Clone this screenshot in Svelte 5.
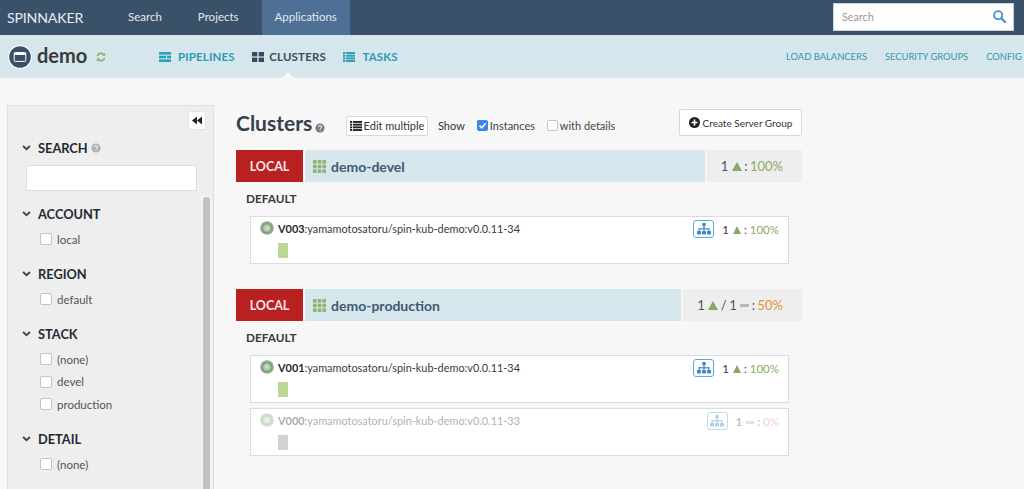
<script>
  const clusters = [
    { name: 'demo-devel', groups: [
      { id: 'V003', rest: ':yamamotosatoru/spin-kub-demo:v0.0.11-34', up: true }
    ], summary: 'up' },
    { name: 'demo-production', groups: [
      { id: 'V001', rest: ':yamamotosatoru/spin-kub-demo:v0.0.11-34', up: true },
      { id: 'V000', rest: ':yamamotosatoru/spin-kub-demo:v0.0.11-33', up: false }
    ], summary: 'mixed' }
  ];
  const filters = [
    { title: 'ACCOUNT', items: ['local'] },
    { title: 'REGION', items: ['default'] },
    { title: 'STACK', items: ['(none)', 'devel', 'production'] },
    { title: 'DETAIL', items: ['(none)'] }
  ];
  const spokes = [0, 51.4, 102.8, 154.3, 205.7, 257.1, 308.6];
</script>

{#snippet chevron()}
  <svg class="chev" viewBox="0 0 10 7" aria-hidden="true"><path d="M1 1.2 5 5 9 1.2" fill="none" stroke="#444" stroke-width="2.2"/></svg>
{/snippet}

{#snippet help(cls)}
  <svg class={cls} viewBox="0 0 12 12" aria-hidden="true"><circle cx="6" cy="6" r="5.5" fill="currentColor"/><path d="M4.2 4.7C4.3 3.6 5 3 6 3s1.9.6 1.9 1.6c0 1.4-1.5 1.3-1.6 2.5" fill="none" stroke="#f4f4f4" stroke-width="1.3"/><rect x="5.5" y="8" width="1.4" height="1.4" fill="#f4f4f4"/></svg>
{/snippet}

{#snippet grid9()}
  <svg class="grid9" viewBox="0 0 13 13" aria-hidden="true">
    {#each [0, 4.7, 9.4] as y}
      {#each [0, 4.7, 9.4] as x}
        <rect {x} {y} width="3.6" height="3.6" fill="#8fb56f"/>
      {/each}
    {/each}
  </svg>
{/snippet}

{#snippet kube()}
  <svg class="kube" viewBox="0 0 14 14" aria-hidden="true">
    <circle cx="7" cy="7" r="6.8" fill="#8dae88"/>
    <polygon points="7,1.6 11.3,3.6 12.3,8.2 9.4,11.9 4.6,11.9 1.7,8.2 2.7,3.6" fill="#7a9e79"/>
    <circle cx="7" cy="7" r="3.6" fill="#b4ccae"/>
    {#each spokes as a}
      <line x1="7" y1="7" x2="7" y2="2.6" stroke="#b4ccae" stroke-width=".7" transform={`rotate(${a} 7 7)`}/>
    {/each}
    <circle cx="7" cy="7" r="1.6" fill="#d3e0ce"/>
  </svg>
{/snippet}

{#snippet lb()}
  <span class="lb">
    <svg viewBox="0 0 14 12" aria-hidden="true">
      <g fill="#3f88c5">
        <rect x="5.3" y="0" width="3.4" height="3.2" rx=".6"/>
        <rect x="6.4" y="3" width="1.2" height="3"/>
        <rect x="1.6" y="5.2" width="10.8" height="1.2"/>
        <rect x="1.6" y="5.2" width="1.2" height="3"/>
        <rect x="11.2" y="5.2" width="1.2" height="3"/>
        <rect x="6.4" y="5.2" width="1.2" height="3"/>
        <rect x="0" y="8" width="4" height="3.4" rx=".6"/>
        <rect x="5" y="8" width="4" height="3.4" rx=".6"/>
        <rect x="10" y="8" width="4" height="3.4" rx=".6"/>
      </g>
    </svg>
  </span>
{/snippet}

<div class="page">
  <header class="topbar">
    <div class="brand">SPINNAKER</div>
    <nav class="mainnav">
      <a class="mainlink">Search</a>
      <a class="mainlink">Projects</a>
      <a class="mainlink active">Applications</a>
    </nav>
    <div class="globalsearch">
      <span>Search</span>
      <svg viewBox="0 0 14 14" aria-hidden="true"><circle cx="5.6" cy="5.6" r="4.4" fill="none" stroke="#4a90d0" stroke-width="2"/><path d="M8.8 8.8 13 13" stroke="#4a90d0" stroke-width="2.4" stroke-linecap="round"/></svg>
    </div>
  </header>

  <div class="appbar">
    <div class="appname">
      <svg class="appicon" viewBox="0 0 24 24" aria-hidden="true">
        <circle cx="12" cy="12" r="11.4" fill="#3a5269" stroke="#fff" stroke-width="1.2"/>
        <rect x="6.2" y="7.6" width="11.6" height="8.8" rx="1" fill="none" stroke="#fff" stroke-width="1"/>
        <rect x="6.2" y="7.6" width="11.6" height="2.4" fill="#fff"/>
      </svg>
      <span class="demo">demo</span>
      <svg class="refresh" viewBox="0 0 12 12" aria-hidden="true"><path d="M1.7 5A4.4 4.4 0 0 1 9.3 3M10.3 7A4.4 4.4 0 0 1 2.7 9" fill="none" stroke="#86ad62" stroke-width="1.9"/><path d="M11 .6V4.4H7.2zM1 11.4V7.6H4.8z" fill="#86ad62"/></svg>
    </div>
    <nav class="sections">
      <a class="section">
        <svg viewBox="0 0 12 10" aria-hidden="true"><g fill="#2b9fb8"><rect width="12" height="2.6"/><rect y="3.7" width="7" height="2.6"/><rect x="8" y="3.7" width="4" height="2.6"/><rect y="7.4" width="12" height="2.6"/></g></svg>
        PIPELINES
      </a>
      <a class="section current">
        <svg viewBox="0 0 12 10" aria-hidden="true"><g fill="#3a4a5c"><rect width="5.3" height="4.4"/><rect x="6.7" width="5.3" height="4.4"/><rect y="5.6" width="5.3" height="4.4"/><rect x="6.7" y="5.6" width="5.3" height="4.4"/></g></svg>
        CLUSTERS
        <i class="notch"></i>
      </a>
      <a class="section">
        <svg viewBox="0 0 12 10" aria-hidden="true"><g fill="#2b9fb8"><rect width="2.4" height="2"/><rect x="3.2" width="8.8" height="2"/><rect y="2.7" width="2.4" height="2"/><rect x="3.2" y="2.7" width="8.8" height="2"/><rect y="5.4" width="2.4" height="2"/><rect x="3.2" y="5.4" width="8.8" height="2"/><rect y="8" width="2.4" height="2"/><rect x="3.2" y="8" width="8.8" height="2"/></g></svg>
        TASKS
      </a>
    </nav>
    <nav class="extras">
      <a>LOAD BALANCERS</a>
      <a>SECURITY GROUPS</a>
      <a>CONFIG</a>
    </nav>
  </div>

  <div class="body">
    <aside class="sidebar">
      <div class="collapse">
        <button class="collapsebtn" aria-label="Collapse">
          <svg viewBox="0 0 10 8" aria-hidden="true"><path d="M5 0V8L0 4zM10 0V8L5 4z" fill="#222"/></svg>
        </button>
      </div>
      <div class="fhead searchhead">
        {@render chevron()}
        <span>SEARCH</span>
        {@render help('helpside')}
      </div>
      <div class="sidesearch"></div>
      <div class="filterlist">
        <div class="track"><div class="thumb"></div></div>
        {#each filters as f}
          <section class="filter">
            <div class="fhead">
              {@render chevron()}
              <span>{f.title}</span>
            </div>
            {#each f.items as item}
              <label class="fitem"><i class="box"></i>{item}</label>
            {/each}
          </section>
        {/each}
      </div>
    </aside>

    <main class="main">
      <div class="toolbar">
        <h1>Clusters</h1>
        {@render help('helptitle')}
        <button class="edit">
          <svg viewBox="0 0 12 10" aria-hidden="true"><g fill="#222"><rect width="2.2" height="1.9"/><rect x="3" width="9" height="1.9"/><rect y="2.7" width="2.2" height="1.9"/><rect x="3" y="2.7" width="9" height="1.9"/><rect y="5.4" width="2.2" height="1.9"/><rect x="3" y="5.4" width="9" height="1.9"/><rect y="8.1" width="2.2" height="1.9"/><rect x="3" y="8.1" width="9" height="1.9"/></g></svg>
          Edit multiple
        </button>
        <span class="show">Show</span>
        <label class="opt first">
          <svg class="checked" viewBox="0 0 11 11" aria-hidden="true"><rect width="11" height="11" rx="2" fill="#3b87e0"/><path d="M2.5 5.6 4.7 7.8 8.6 3.2" fill="none" stroke="#fff" stroke-width="1.5"/></svg>
          Instances
        </label>
        <label class="opt"><i class="box small"></i>with details</label>
        <button class="create">
          <svg viewBox="0 0 11 11" aria-hidden="true"><circle cx="5.5" cy="5.5" r="5.5" fill="#222"/><path d="M5.5 2.5v6M2.5 5.5h6" stroke="#fff" stroke-width="1.7"/></svg>
          Create Server Group
        </button>
      </div>

      {#each clusters as c}
        <section class="cluster">
          <div class="chead">
            <div class="account">LOCAL</div>
            <div class="cname">{@render grid9()}<span>{c.name}</span></div>
            <div class="ccount">
              {#if c.summary === 'up'}
                <span class="n">1</span><i class="tri"></i><span class="n">:</span><span class="good">100%</span>
              {:else}
                <span class="n">1</span><i class="tri"></i><span class="n">/</span><span class="n">1</span><i class="dash"></i><span class="n">:</span><span class="warn">50%</span>
              {/if}
            </div>
          </div>
          <h2>DEFAULT</h2>
          <div class="groups">
            {#each c.groups as g}
              <div class="group" class:disabled={!g.up}>
                <div class="gtop">
                  {@render kube()}
                  <span class="gname"><b>{g.id}</b>{g.rest}</span>
                  <span class="gright">
                    {@render lb()}
                    <span class="gcount">
                      {#if g.up}
                        <span class="n">1</span><i class="tri sm"></i><span class="n">:</span><span class="good">100%</span>
                      {:else}
                        <span class="n">1</span><i class="dash sm"></i><span class="n">:</span><span class="bad">0%</span>
                      {/if}
                    </span>
                  </span>
                </div>
                <i class="bar"></i>
              </div>
            {/each}
          </div>
        </section>
      {/each}
    </main>
  </div>
</div>

<style>
  :global(body) { margin: 0; overflow: hidden; }
  .page {
    width: 1024px; height: 489px; overflow: hidden; background: #f7f7f7;
    font-family: "Lato", "Open Sans", sans-serif; color: #3f4a54;
  }
  a { cursor: pointer; }
  i { display: block; }

  .topbar { height: 35px; background: #3a5269; display: flex; align-items: stretch; }
  .brand { width: 110px; padding-left: 7px; box-sizing: border-box; line-height: 35px; color: #e6ebef; font-size: 14.2px; letter-spacing: -.2px; }
  .mainnav { display: flex; }
  .mainlink { margin: 0 5px; padding: 0 13px; line-height: 34px; color: #e4e9ed; font-size: 11.5px; }
  .mainlink.active { background: #4d7094; }
  .globalsearch {
    margin: 3px 10px 0 auto; width: 181px; height: 28px; box-sizing: border-box; background: #fff; border: 1px solid #c6d1da;
    display: flex; align-items: center; justify-content: space-between; padding: 0 7px 1px 8px;
    font-size: 10.8px; color: #999;
  }
  .globalsearch svg { width: 13px; height: 13px; }

  .appbar { height: 43px; background: #d5e6ec; display: flex; align-items: center; position: relative; }
  .appname { width: 159px; padding-left: 8px; box-sizing: border-box; display: flex; align-items: center; flex: none; }
  .appicon { width: 24px; height: 24px; flex: none; }
  .demo { margin-left: 5px; font-size: 20px; font-weight: 700; color: #3a3a3a; line-height: 24px; margin-top: -3px; }
  .refresh { width: 10px; height: 10px; margin-left: 9px; }
  .sections { display: flex; gap: 17.5px; flex: none; }
  .section { display: flex; align-items: center; gap: 7px; font-size: 11.5px; font-weight: 700; color: #2d9cb3; position: relative; line-height: 20px; letter-spacing: .15px; }
  .section svg { width: 12px; height: 10px; }
  .section.current { color: #3f4a5a; gap: 5px; }
  .notch { position: absolute; left: 29px; bottom: -12px; border: 7px solid transparent; border-top: 0; border-bottom-color: #f7f7f7; }
  .extras { position: absolute; left: 786px; top: 13px; display: flex; gap: 18px; white-space: nowrap; font-size: 9.4px; color: #3497ae; line-height: 18px; }

  .body { display: flex; padding: 27px 0 0 7px; }
  .sidebar {
    width: 207px; height: 400px; box-sizing: border-box; flex: none; background: #eeeeee;
    border: 1px solid #dedede; position: relative;
  }
  .collapse { display: flex; justify-content: flex-end; padding: 5px 7px 0 0; height: 17px; }
  .collapsebtn { width: 18px; height: 19px; padding: 0; background: #fff; border: 1px solid #e4e4e4; border-radius: 2px; display: flex; align-items: center; justify-content: center; }
  .collapsebtn svg { width: 10px; height: 9px; }
  .fhead { display: flex; align-items: center; padding-left: 14px; font-size: 12.8px; font-weight: 700; color: #1f2a33; height: 18px; }
  .fhead span { margin-left: 7px; }
  .searchhead { margin-top: 11px; }
  .chev { width: 9px; height: 6px; flex: none; }
  .helpside { width: 10px; height: 10px; color: #b0b0b0; margin-left: 3px; }
  .sidesearch { margin: 8px 16px 0 18px; height: 24px; background: #fff; border: 1px solid #ddd; border-radius: 2px; }
  .filterlist { position: relative; padding-top: 14px; }
  .track { position: absolute; left: 193px; top: 5px; width: 11px; height: 320px; background: #f4f4f4; }
  .thumb { margin: 1px 2px 0; width: 7px; height: 300px; background: #c2c2c2; border-radius: 3px 3px 0 0; }
  .filter { margin-bottom: 16.5px; position: relative; }
  .fitem { display: flex; align-items: center; gap: 5px; padding-left: 32px; margin-top: 3.5px; height: 19px; font-size: 11.5px; color: #555; }
  .fitem:first-of-type { margin-top: 6.5px; }
  .box { width: 10px; height: 10px; background: #fff; border: 1px solid #c4c4c4; border-radius: 2px; flex: none; }

  .main { width: 566px; margin-left: 22px; }
  .toolbar { display: flex; align-items: center; height: 32px; margin-top: 2px; margin-bottom: 11px; position: relative; }
  h1 { margin: 0; font-size: 21px; font-weight: 700; color: #35404a; width: 79px; white-space: nowrap; line-height: 28px; }
  .helptitle { width: 10px; height: 10px; color: #7a7a7a; margin-top: 9px; flex: none; }
  .edit {
    margin: 5px 0 0 21px; width: 82px; height: 20px; padding: 0; background: #fff; border: 1px solid #d8d8d8; border-radius: 2px;
    font: inherit; font-size: 11px; color: #333; display: flex; align-items: center; justify-content: center; gap: 2px; white-space: nowrap;
  }
  .edit svg { width: 12px; height: 10px; }
  .show { margin: 5px 0 0 10px; font-size: 11px; color: #333; }
  .opt { display: flex; align-items: center; gap: 2px; margin: 5px 0 0 12px; font-size: 11px; color: #444; white-space: nowrap; }
  .opt.first { margin-left: 12px; width: 58px; }
  .checked { width: 11px; height: 11px; flex: none; }
  .box.small { width: 9px; height: 9px; }
  .create {
    margin: -1px 0 0 auto; width: 123px; height: 27px; padding: 0; background: #fff; border: 1px solid #d8d8d8; border-radius: 2px;
    font: inherit; font-size: 10px; color: #333; display: flex; align-items: center; justify-content: center; gap: 3px; white-space: nowrap;
  }
  .create svg { width: 11px; height: 11px; }

  .cluster { margin-bottom: 25px; }
  .chead { display: flex; height: 32px; align-items: stretch; gap: 1px; }
  .account { width: 67px; background: #b92020; color: #f5e8e8; font-size: 12.5px; font-weight: 700; display: flex; align-items: center; justify-content: center; }
  .cname { flex: 1; margin-left: 1px; background: #d5e6ec; display: flex; align-items: center; padding-left: 8px; gap: 5px; font-size: 14px; font-weight: 700; color: #3f5a72; }
  .grid9 { width: 13px; height: 13px; flex: none; }
  .ccount { background: #eeeeee; margin-left: 1px; padding: 0 19px 0 14px; display: flex; align-items: center; gap: 2.5px; font-size: 13px; }
  .n { color: #3f5a72; }
  .good { color: #86ad62; }
  .warn { color: #e8913a; }
  .bad { color: #e98787; }
  .tri { width: 0; height: 0; border: 5px solid transparent; border-top: 0; border-bottom: 9px solid #86a868; margin-left: 1px; }
  .tri.sm { border-width: 0 4.5px 8px; border-bottom-color: #86a868; }
  .dash { width: 9px; height: 3px; background: #b9b9b9; margin: 1px .5px 0; }
  .dash.sm { width: 8px; margin: 1px .5px 0; }

  h2 { margin: 8px 0 0 10px; font-size: 11.8px; font-weight: 700; color: #3a3a3a; line-height: 17px; }
  .groups { margin: 9px 13px 0 14px; display: flex; flex-direction: column; gap: 5px; }
  .group { height: 48px; box-sizing: border-box; background: #fff; border: 1px solid #dcdcdc; padding: 4px 9px 0 9px; }
  .gtop { display: flex; align-items: flex-start; height: 20px; }
  .kube { width: 14px; height: 14px; flex: none; }
  .gname { margin-left: 4px; font-size: 10.9px; color: #3a3a3a; line-height: 16px; white-space: nowrap; }
  .gname b { font-weight: 700; color: #2b2b2b; }
  .gright { margin-left: auto; display: flex; align-items: center; gap: 8px; }
  .lb { width: 21px; height: 18px; box-sizing: border-box; border: 1px solid #4db3cc; border-radius: 3px; background: #fff; display: flex; align-items: center; justify-content: center; margin-top: -1px; }
  .lb svg { width: 14px; height: 12px; }
  .gcount { display: flex; align-items: center; gap: 3px; font-size: 11.5px; line-height: 16px; }
  .gcount .n { color: #3a3a3a; }
  .bar { width: 10px; height: 15px; background: #b8d99a; margin: 2px 0 0 18px; }
  .group.disabled .gtop { opacity: .4; }
  .group.disabled .bar { background: #d2d2d2; }
</style>
